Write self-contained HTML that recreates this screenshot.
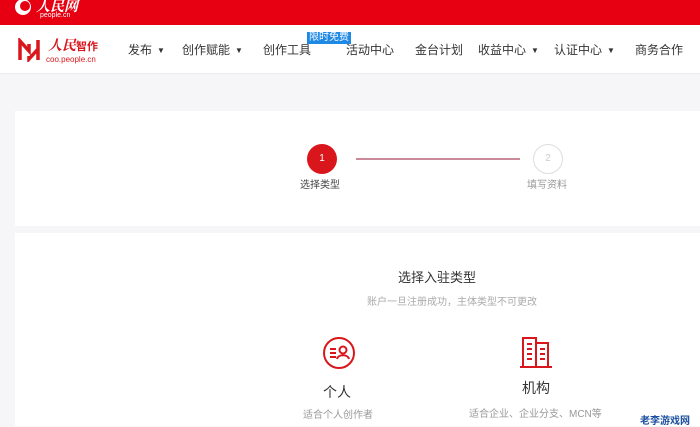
<!DOCTYPE html>
<html><head><meta charset="utf-8"><style>
*{margin:0;padding:0;box-sizing:border-box}
body{width:700px;height:426px;overflow:hidden;background:#f6f6f8;font-family:"Liberation Sans","Noto Sans CJK SC",sans-serif;position:relative}
.top{position:absolute;left:0;top:0;width:700px;height:25px;background:#e60012}
.nav{position:absolute;left:0;top:25px;width:700px;height:49px;background:#fff;border-bottom:1px solid #ececec}
.ni{position:absolute;top:16px;font-size:12px;color:#333;white-space:nowrap}
.tri{font-size:8px;margin-left:5px;vertical-align:1px}
.card{position:absolute;left:15px;width:685px;background:#fff}
.c{position:absolute;text-align:center;white-space:nowrap}
</style></head><body>
<div class="top">
<svg style="position:absolute;left:14px;top:0" width="18" height="18"><circle cx="9" cy="7" r="8" fill="#fff"/><circle cx="11" cy="6" r="5" fill="#e60012"/></svg>
<div style="position:absolute;left:36px;top:-4px;color:#fff;font:italic bold 14px 'Liberation Serif','Noto Serif CJK SC',serif">人民网</div>
<div style="position:absolute;left:40px;top:12px;color:#fff;font-size:7px">people.cn</div>
</div>
<div class="nav">
<svg style="position:absolute;left:17px;top:13px" width="24" height="24" viewBox="0 0 24 24"><path d="M3 22V3l9 10V6M12 18v3l9-10v11M21 2v9" fill="none" stroke="#d9161c" stroke-width="3.5"/></svg>
<div style="position:absolute;left:48px;top:10px;font:italic bold 14px 'Liberation Serif','Noto Serif CJK SC',serif;color:#d9161c">人民<span style="font:bold 11px 'Noto Sans CJK SC';font-style:normal">智作</span></div>
<div style="position:absolute;left:46px;top:30px;font-size:8px;color:#d9161c">coo.people.cn</div>
<div class="ni" style="left:128px">发布<span class="tri">▼</span></div>
<div class="ni" style="left:182px">创作赋能<span class="tri">▼</span></div>
<div class="ni" style="left:263px">创作工具</div>
<div style="position:absolute;left:307px;top:7px;background:#1e88e5;color:#fff;font-size:10px;line-height:12px;padding:0 2px">限时免费</div>
<div class="ni" style="left:346px">活动中心</div>
<div class="ni" style="left:415px">金台计划</div>
<div class="ni" style="left:478px">收益中心<span class="tri">▼</span></div>
<div class="ni" style="left:554px">认证中心<span class="tri">▼</span></div>
<div class="ni" style="left:635px">商务合作</div>
</div>
<div class="card" style="top:111px;height:115px"></div>
<div class="card" style="top:233px;height:193px"></div>
<div style="position:absolute;left:307px;top:144px;width:30px;height:30px;border-radius:50%;background:#d9161c;color:#fff;font-size:10px;text-align:center;line-height:30px">1</div>
<div style="position:absolute;left:356px;top:158px;width:164px;height:2px;background:#c98a9a"></div>
<div style="position:absolute;left:533px;top:144px;width:30px;height:30px;border-radius:50%;border:1px solid #ddd;color:#ccc;font-size:10px;text-align:center;line-height:28px">2</div>
<div class="c" style="left:300px;top:176px;font-size:10px;color:#444">选择类型</div>
<div class="c" style="left:527px;top:176px;font-size:10px;color:#999">填写资料</div>
<div class="c" style="left:0;width:874px;top:267px;font-size:13px;color:#333">选择入驻类型</div>
<div class="c" style="left:0;width:904px;top:293px;font-size:10px;color:#aaa">账户一旦注册成功，主体类型不可更改</div>
<svg style="position:absolute;left:322px;top:336px" width="34" height="34" viewBox="0 0 34 34" fill="none" stroke="#d9161c" stroke-width="2"><circle cx="17" cy="17" r="15"/><path d="M8 13h6M8 17h6M8 21h6"/><circle cx="21" cy="14" r="3.5"/><path d="M15 23c1-5 11-5 12 0"/></svg>
<svg style="position:absolute;left:519px;top:335px" width="34" height="34" viewBox="0 0 34 34" fill="none" stroke="#d9161c" stroke-width="2"><path d="M1 32h32M4 32V3h13v29M17 8h12v24M8 9h5M8 14h5M8 19h5M8 24h5M21 14h5M21 19h5M21 24h5"/></svg>
<div class="c" style="left:323px;top:382px;font-size:14px;color:#333">个人</div>
<div class="c" style="left:522px;top:378px;font-size:14px;color:#333">机构</div>
<div class="c" style="left:303px;top:406px;font-size:10px;color:#999">适合个人创作者</div>
<div class="c" style="left:469px;top:405px;font-size:10px;color:#999">适合企业、企业分支、MCN等</div>
<div style="position:absolute;left:640px;top:412px;font-size:10px;font-weight:bold;color:#1a4fa0">老李游戏网</div>
</body></html>
